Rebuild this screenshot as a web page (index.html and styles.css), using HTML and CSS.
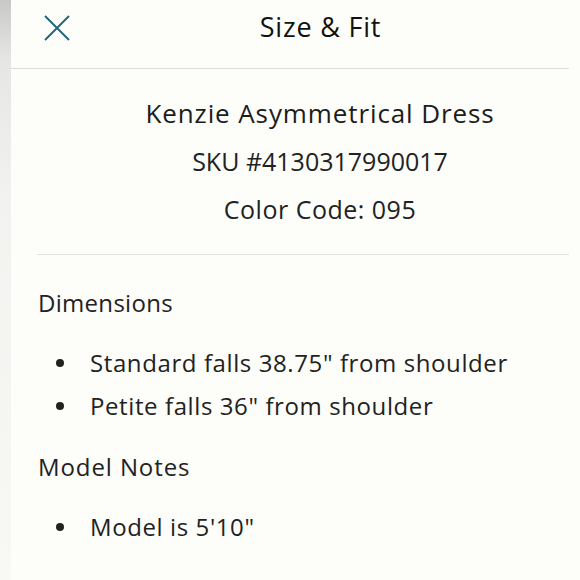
FILE: index.html
```html
<!DOCTYPE html>
<html>
<head>
<meta charset="utf-8">
<link rel="stylesheet" href="styles.css">
</head>
<body>
<div class="screen">
  <div class="edge"></div>
  <div class="panel">
    <header class="header">
      <button class="close" aria-label="Close">
        <svg width="26" height="26" viewBox="0 0 26 26"><path d="M1 1 L25 25 M25 1 L1 25" stroke="#22687a" stroke-width="2" fill="none"/></svg>
      </button>
      <h1 class="title">Size &amp; Fit</h1>
    </header>
    <section class="product">
      <h2 class="name">Kenzie Asymmetrical Dress</h2>
      <p class="meta">SKU #4130317990017</p>
      <p class="meta code">Color Code: 095</p>
    </section>
    <section class="details">
      <h3 class="heading">Dimensions</h3>
      <ul class="list">
        <li>Standard falls 38.75" from shoulder</li>
        <li>Petite falls 36" from shoulder</li>
      </ul>
      <h3 class="heading notes">Model Notes</h3>
      <ul class="list">
        <li>Model is 5'10"</li>
      </ul>
    </section>
  </div>
</div>
</body>
</html>
```
FILE: styles.css
```css
html, body {
  margin: 0;
  padding: 0;
  width: 580px;
  height: 580px;
  overflow: hidden;
  background: #fdfdfa;
}
.screen {
  display: flex;
  height: 580px;
  font-family: "Open Sans", "Noto Sans", sans-serif;
  color: #222;
}
.edge {
  width: 11px;
  flex: none;
  background: linear-gradient(to bottom, #c8c8c6 0px, #e6e6e4 60px, #f2f2f0 200px, #f8f8f5 580px);
}
.panel {
  flex: 1;
  display: flex;
  flex-direction: column;
  padding-right: 11px;
}
.header {
  height: 68px;
  display: flex;
  align-items: flex-start;
  border-bottom: 1px solid #dcdcda;
}
.close {
  border: 0;
  background: none;
  padding: 0;
  margin: 15px 0 0 33px;
  width: 26px;
  height: 26px;
  display: flex;
  flex: none;
}
.title {
  margin: 7px 0 0 2px;
  flex: 1;
  text-align: center;
  font-size: 27px;
  line-height: 40px;
  letter-spacing: 0.8px;
  font-weight: 400;
  color: #111;
}
.product {
  display: flex;
  flex-direction: column;
  align-items: center;
  margin-left: 26px;
  padding: 27px 0 0 34px;
  height: 186px;
  box-sizing: border-box;
  border-bottom: 1px solid #e2e2e0;
}
.name {
  margin: 0;
  font-size: 26px;
  line-height: 34px;
  letter-spacing: 0.9px;
  font-weight: 400;
  color: #1c1c1c;
}
.meta {
  margin: 14px 0 0;
  font-size: 25px;
  line-height: 34px;
}
.code {
  letter-spacing: 0.5px;
}
.details {
  padding: 31px 0 0 27px;
}
.heading {
  margin: 0;
  font-size: 24px;
  line-height: 34px;
  letter-spacing: 0.3px;
  font-weight: 400;
}
.notes {
  letter-spacing: 0.9px;
}
.list {
  list-style: none;
  margin: 26px 0 27px;
  padding: 0;
}
.list li {
  position: relative;
  padding-left: 52px;
  font-size: 24px;
  line-height: 34px;
  letter-spacing: 0.6px;
  margin-bottom: 9px;
}
.list li::before {
  content: "";
  position: absolute;
  left: 18px;
  top: 50%;
  width: 8px;
  height: 8px;
  margin-top: -4px;
  border-radius: 50%;
  background: #222;
}
```
